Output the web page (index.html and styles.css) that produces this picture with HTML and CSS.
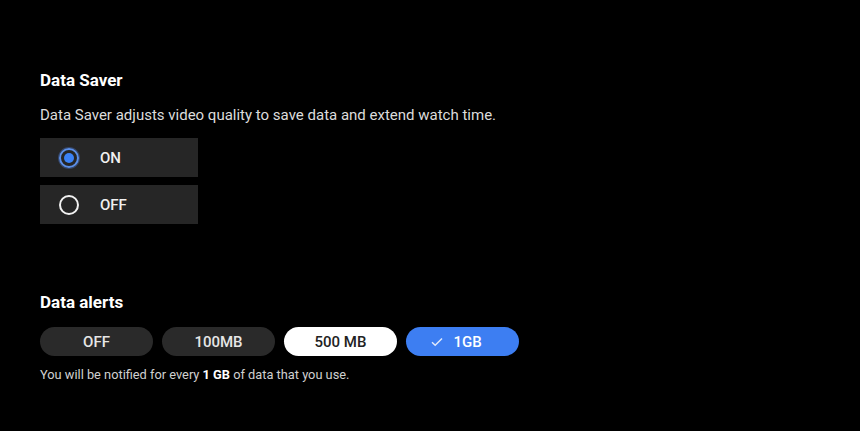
FILE: index.html
```html
<!DOCTYPE html>
<html lang="en">
  <head>
    <meta charset="UTF-8" />
    <title>Data Saver</title>
    <link rel="stylesheet" href="styles.css">
  </head>
  <body>
    <div class="container">
      <section class="saver">
        <h2>Data Saver</h2>
        <p class="desc">
          Data Saver adjusts video quality to save data and extend watch time.
        </p>
        <div class="options">
          <div class="option selected">
            <span class="radio"></span>
            <span class="option-label">ON</span>
          </div>
          <div class="option">
            <span class="radio"></span>
            <span class="option-label">OFF</span>
          </div>
        </div>
      </section>

      <section class="alerts">
        <h2>Data alerts</h2>
        <div class="chips">
          <button class="chip">OFF</button>
          <button class="chip">100MB</button>
          <button class="chip focused">500 MB</button>
          <button class="chip active">
            <svg class="check" width="12" height="10" viewBox="0 0 12 10">
              <path d="M1 5.2 L4.2 8.3 L11 1.5" fill="none" stroke="currentColor" stroke-width="1.5" />
            </svg>
            1GB
          </button>
        </div>
        <p class="note">
          You will be notified for every <b>1 GB</b> of data that you use.
        </p>
      </section>
    </div>
  </body>
</html>
```

FILE: styles.css
```css
* {
  margin: 0;
  padding: 0;
  box-sizing: border-box;
  font-family: Roboto, "Noto Sans", "Liberation Sans", sans-serif;
}

body {
  background: #000;
  color: #fff;
  width: 860px;
  height: 431px;
  overflow: hidden;
}

.container {
  padding: 70px 40px 0;
}

h2 {
  font-size: 17px;
  line-height: 20px;
  font-weight: 700;
  color: #fff;
}

.desc {
  margin-top: 15px;
  font-size: 15px;
  line-height: 20px;
  color: #dcdcdc;
}

.options {
  margin-top: 13px;
  display: flex;
  flex-direction: column;
  gap: 8px;
}

.option {
  width: 158px;
  height: 39px;
  background: #262626;
  display: flex;
  align-items: center;
  padding-left: 19px;
  gap: 21px;
}

.radio {
  width: 20px;
  height: 20px;
  border-radius: 50%;
  border: 2px solid #f2f2f2;
  display: flex;
  align-items: center;
  justify-content: center;
}

.option.selected .radio {
  border-color: #5b8fe8;
  box-shadow: 0 0 0 1px rgba(80, 130, 230, 0.35);
}

.option.selected .radio::after {
  content: "";
  width: 10px;
  height: 10px;
  border-radius: 50%;
  background: #3b82f6;
}

.option-label {
  font-size: 15px;
  font-weight: 500;
  color: #f0f0f0;
}

.alerts {
  margin-top: 68px;
}

.chips {
  margin-top: 15px;
  display: flex;
  gap: 9px;
}

.chip {
  width: 113px;
  height: 29px;
  border: none;
  border-radius: 15px;
  background: #2a2a2a;
  color: #e6e6e6;
  font-size: 15px;
  font-weight: 500;
  display: flex;
  align-items: center;
  justify-content: center;
  gap: 10px;
}

.chip.focused {
  background: #fff;
  color: #222;
}

.chip.active {
  background: #3d7ef2;
  color: #fff;
  padding-right: 12px;
}

.check {
  color: #dfe8fb;
}

.note {
  margin-top: 10px;
  font-size: 12.8px;
  line-height: 17px;
  color: #d0d0d0;
}

.note b {
  color: #fff;
  font-weight: 700;
}
```
